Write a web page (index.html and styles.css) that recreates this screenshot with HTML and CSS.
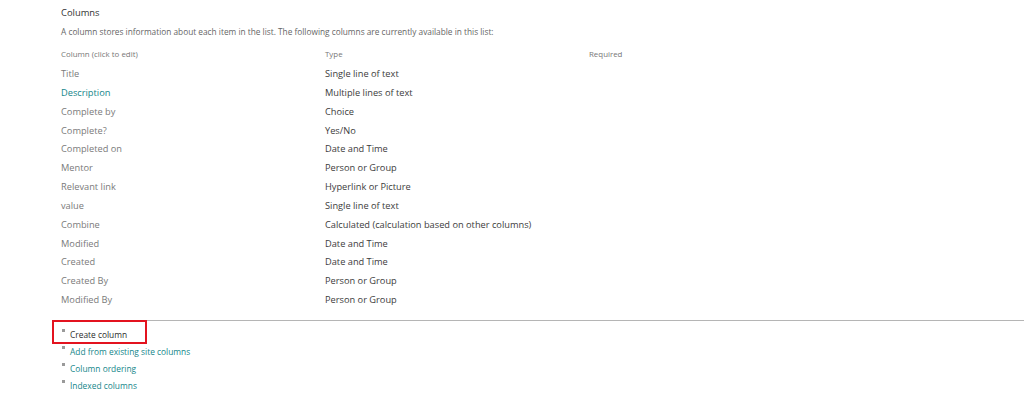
FILE: index.html
```html
<!DOCTYPE html>
<html>
<head>
<meta charset="utf-8">
<link rel="stylesheet" href="styles.css">
</head>
<body>
<div class="page">
  <div class="inner">
    <h2 class="title">Columns</h2>
    <p class="desc">A column stores information about each item in the list. The following columns are currently available in this list:</p>
    <div class="grid">
      <div class="hd">Column (click to edit)</div><div class="hd">Type</div><div class="hd">Required</div>
      <div class="name">Title</div><div class="type">Single line of text</div><div></div>
      <div class="name link">Description</div><div class="type">Multiple lines of text</div><div></div>
      <div class="name">Complete by</div><div class="type">Choice</div><div></div>
      <div class="name">Complete?</div><div class="type">Yes/No</div><div></div>
      <div class="name">Completed on</div><div class="type">Date and Time</div><div></div>
      <div class="name">Mentor</div><div class="type">Person or Group</div><div></div>
      <div class="name">Relevant link</div><div class="type">Hyperlink or Picture</div><div></div>
      <div class="name">value</div><div class="type">Single line of text</div><div></div>
      <div class="name">Combine</div><div class="type">Calculated (calculation based on other columns)</div><div></div>
      <div class="name">Modified</div><div class="type">Date and Time</div><div></div>
      <div class="name">Created</div><div class="type">Date and Time</div><div></div>
      <div class="name">Created By</div><div class="type">Person or Group</div><div></div>
      <div class="name">Modified By</div><div class="type">Person or Group</div><div></div>
    </div>
  </div>
  <div class="actions">
    <ul class="links">
      <li><span class="bullet"></span><span class="dark">Create column</span></li>
      <li><span class="bullet"></span><span>Add from existing site columns</span></li>
      <li><span class="bullet"></span><span>Column ordering</span></li>
      <li><span class="bullet"></span><span>Indexed columns</span></li>
    </ul>
    <div class="highlight"></div>
  </div>
</div>
</body>
</html>
```
FILE: styles.css
```css
html, body {
  margin: 0;
  padding: 0;
  background: #ffffff;
}
body {
  font-family: "Open Sans", "Noto Sans", "Liberation Sans", sans-serif;
  color: #444;
}
.page {
  padding-left: 53px;
}
.inner {
  padding-left: 8px;
  padding-top: 6px;
}
.title {
  margin: 0;
  font-size: 9.4px;
  font-weight: normal;
  color: #333;
  line-height: 14px;
}
.desc {
  margin: 6px 0 0 0;
  font-size: 8.3px;
  line-height: 12px;
  color: #666;
}
.grid {
  margin-top: 10px;
  display: grid;
  grid-template-columns: 264px 264px 1fr;
}
.hd {
  font-size: 7.9px;
  line-height: 12px;
  color: #777;
  padding-bottom: 5px;
}
.name, .type {
  font-size: 9.25px;
  line-height: 18.84px;
}
.name {
  color: #7a7a7a;
}
.name.link {
  color: #14868a;
}
.type {
  color: #3c3c3c;
}
.actions {
  position: relative;
  margin-top: 10px;
  border-top: 1px solid #b5b5b5;
}
.links {
  list-style: none;
  margin: 0;
  padding: 5px 0 0 9px;
}
.links li {
  display: flex;
  align-items: center;
  font-size: 8.4px;
  line-height: 17px;
  color: #14868a;
}
.bullet {
  width: 3px;
  height: 3px;
  background: #9a9a9a;
  margin-right: 5px;
  margin-top: -7px;
}
.dark {
  color: #2b2b2b;
}
.highlight {
  position: absolute;
  left: -1px;
  top: -1px;
  width: 95px;
  height: 24px;
  box-sizing: border-box;
  border: 2px solid #e3131f;
}
```
